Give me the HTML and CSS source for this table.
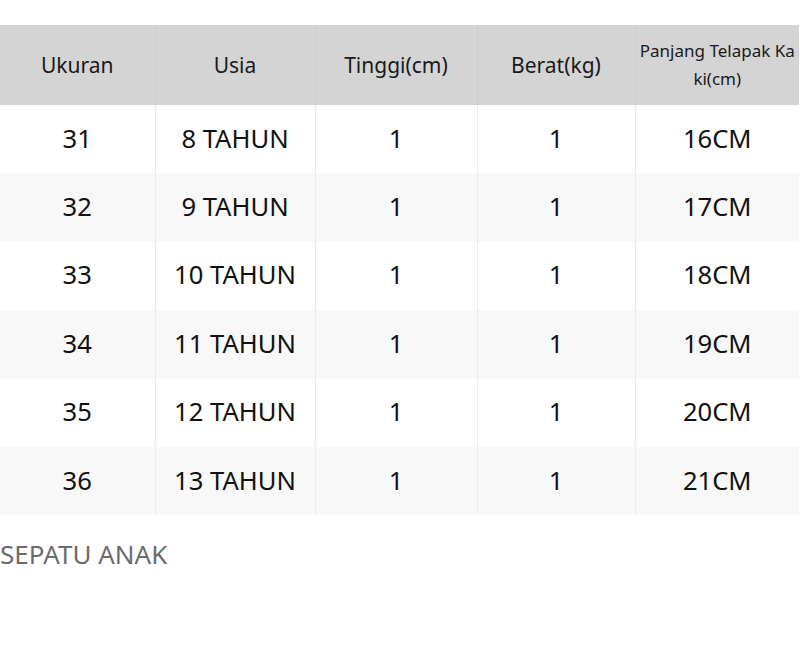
FILE: index.html
```html
<!DOCTYPE html>
<html>
<head>
<meta charset="utf-8">
<link rel="stylesheet" href="styles.css">
</head>
<body>
<table class="size-table">
  <colgroup>
    <col class="c1"><col class="c2"><col class="c3"><col class="c4"><col class="c5">
  </colgroup>
  <thead>
    <tr>
      <th>Ukuran</th>
      <th>Usia</th>
      <th>Tinggi(cm)</th>
      <th>Berat(kg)</th>
      <th class="small">Panjang Telapak Kaki(cm)</th>
    </tr>
  </thead>
  <tbody>
    <tr><td>31</td><td>8 TAHUN</td><td>1</td><td>1</td><td>16CM</td></tr>
    <tr><td>32</td><td>9 TAHUN</td><td>1</td><td>1</td><td>17CM</td></tr>
    <tr><td>33</td><td>10 TAHUN</td><td>1</td><td>1</td><td>18CM</td></tr>
    <tr><td>34</td><td>11 TAHUN</td><td>1</td><td>1</td><td>19CM</td></tr>
    <tr><td>35</td><td>12 TAHUN</td><td>1</td><td>1</td><td>20CM</td></tr>
    <tr><td>36</td><td>13 TAHUN</td><td>1</td><td>1</td><td>21CM</td></tr>
  </tbody>
</table>
<p class="caption">SEPATU ANAK</p>
</body>
</html>
```
FILE: styles.css
```css
html, body {
  margin: 0;
  padding: 0;
  background: #ffffff;
  font-family: "Noto Sans", "Open Sans", sans-serif;
  color: #111111;
}
.size-table {
  margin-top: 25px;
  width: 799px;
  border-collapse: collapse;
  table-layout: fixed;
}
.c1 { width: 155px; }
.c2 { width: 160px; }
.c3 { width: 162px; }
.c4 { width: 158px; }
.c5 { width: 164px; }
.size-table th,
.size-table td {
  text-align: center;
  vertical-align: middle;
  border: 1px solid #ececec;
  border-top: none;
  border-bottom: none;
  padding: 0 4px;
}
.size-table tr > :first-child { border-left: none; }
.size-table tr > :last-child { border-right: none; }
.size-table thead th {
  background: #d4d4d4;
  border-color: #cdcdcd;
  height: 80px;
  font-weight: 400;
  font-size: 21px;
  color: #1a1a1a;
}
.size-table thead th.small {
  font-size: 17px;
  line-height: 28px;
  word-break: break-all;
  padding: 0 3px;
}
.size-table tbody td {
  height: 66.4px;
  padding-bottom: 2px;
  font-size: 25.6px;
  color: #111111;
  background: #ffffff;
}
.size-table tbody tr:nth-child(even) td {
  background: #f8f8f8;
}
.caption {
  margin: 21px 0 0 0;
  font-size: 26px;
  color: #6b6b6b;
  line-height: 36px;
}
```
